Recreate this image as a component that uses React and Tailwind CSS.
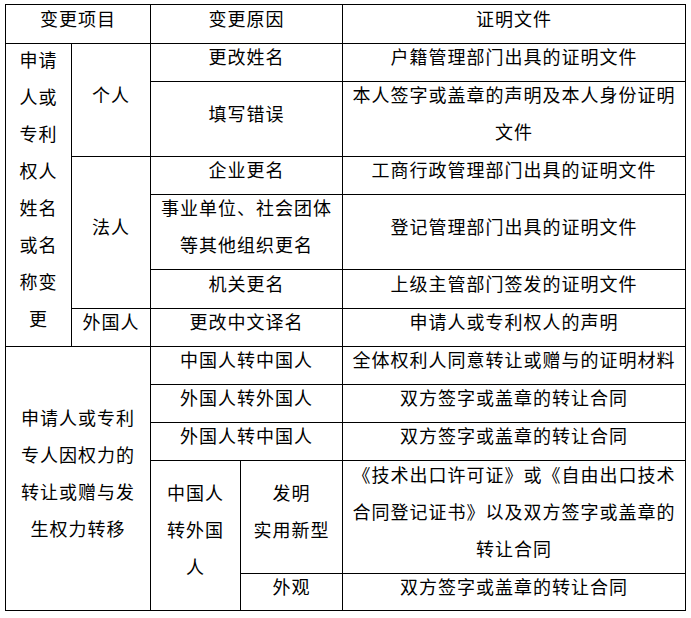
const font = { fontFamily: '"Noto Sans CJK SC", "Noto Sans", sans-serif' };

function Cell({ className = "", children }) {
  return (
    <div
      className={
        "flex items-center justify-center border-r border-b border-black pb-[12px] text-center " +
        className
      }
    >
      <div>{children}</div>
    </div>
  );
}

function Lines({ items }) {
  return items.map((line, i) => (
    <div key={i} className="whitespace-nowrap">
      {line}
    </div>
  ));
}

export default function App() {
  return (
    <div className="min-h-[618px] w-[691px] bg-white pt-[4px] pl-[5px] text-[18px] leading-[37px] tracking-[1px] text-black" style={font}>
      <div className="grid w-fit grid-cols-[66px_79px_90px_102px_343px] grid-rows-[39px_38px_75px_38px_75px_39px_38px_38px_38px_38px_113px_37px] border-l border-t border-black">
        {/* header */}
        <Cell className="col-span-2 col-start-1 row-start-1">变更项目</Cell>
        <Cell className="col-span-2 col-start-3 row-start-1">变更原因</Cell>
        <Cell className="col-start-5 row-start-1">证明文件</Cell>

        {/* 名称变更 */}
        <Cell className="col-start-1 row-start-2 row-span-6">
          <Lines items={["申请", "人或", "专利", "权人", "姓名", "或名", "称变", "更"]} />
        </Cell>

        <Cell className="col-start-2 row-start-2 row-span-2">个人</Cell>
        <Cell className="col-span-2 col-start-3 row-start-2">更改姓名</Cell>
        <Cell className="col-start-5 row-start-2">户籍管理部门出具的证明文件</Cell>
        <Cell className="col-span-2 col-start-3 row-start-3">填写错误</Cell>
        <Cell className="col-start-5 row-start-3">
          <Lines items={["本人签字或盖章的声明及本人身份证明", "文件"]} />
        </Cell>

        <Cell className="col-start-2 row-start-4 row-span-3">法人</Cell>
        <Cell className="col-span-2 col-start-3 row-start-4">企业更名</Cell>
        <Cell className="col-start-5 row-start-4">工商行政管理部门出具的证明文件</Cell>
        <Cell className="col-span-2 col-start-3 row-start-5">
          <Lines items={["事业单位、社会团体", "等其他组织更名"]} />
        </Cell>
        <Cell className="col-start-5 row-start-5">登记管理部门出具的证明文件</Cell>
        <Cell className="col-span-2 col-start-3 row-start-6">机关更名</Cell>
        <Cell className="col-start-5 row-start-6">上级主管部门签发的证明文件</Cell>

        <Cell className="col-start-2 row-start-7">外国人</Cell>
        <Cell className="col-span-2 col-start-3 row-start-7">更改中文译名</Cell>
        <Cell className="col-start-5 row-start-7">申请人或专利权人的声明</Cell>

        {/* 权力转移 */}
        <Cell className="col-span-2 col-start-1 row-start-8 row-span-5">
          <Lines items={["申请人或专利", "专人因权力的", "转让或赠与发", "生权力转移"]} />
        </Cell>
        <Cell className="col-span-2 col-start-3 row-start-8">中国人转中国人</Cell>
        <Cell className="col-start-5 row-start-8">全体权利人同意转让或赠与的证明材料</Cell>
        <Cell className="col-span-2 col-start-3 row-start-9">外国人转外国人</Cell>
        <Cell className="col-start-5 row-start-9">双方签字或盖章的转让合同</Cell>
        <Cell className="col-span-2 col-start-3 row-start-10">外国人转中国人</Cell>
        <Cell className="col-start-5 row-start-10">双方签字或盖章的转让合同</Cell>

        <Cell className="col-start-3 row-start-11 row-span-2">
          <Lines items={["中国人", "转外国", "人"]} />
        </Cell>
        <Cell className="col-start-4 row-start-11">
          <Lines items={["发明", "实用新型"]} />
        </Cell>
        <Cell className="col-start-5 row-start-11">
          <Lines
            items={[
              "《技术出口许可证》或《自由出口技术",
              "合同登记证书》以及双方签字或盖章的",
              "转让合同",
            ]}
          />
        </Cell>
        <Cell className="col-start-4 row-start-12">外观</Cell>
        <Cell className="col-start-5 row-start-12">双方签字或盖章的转让合同</Cell>
      </div>
    </div>
  );
}
